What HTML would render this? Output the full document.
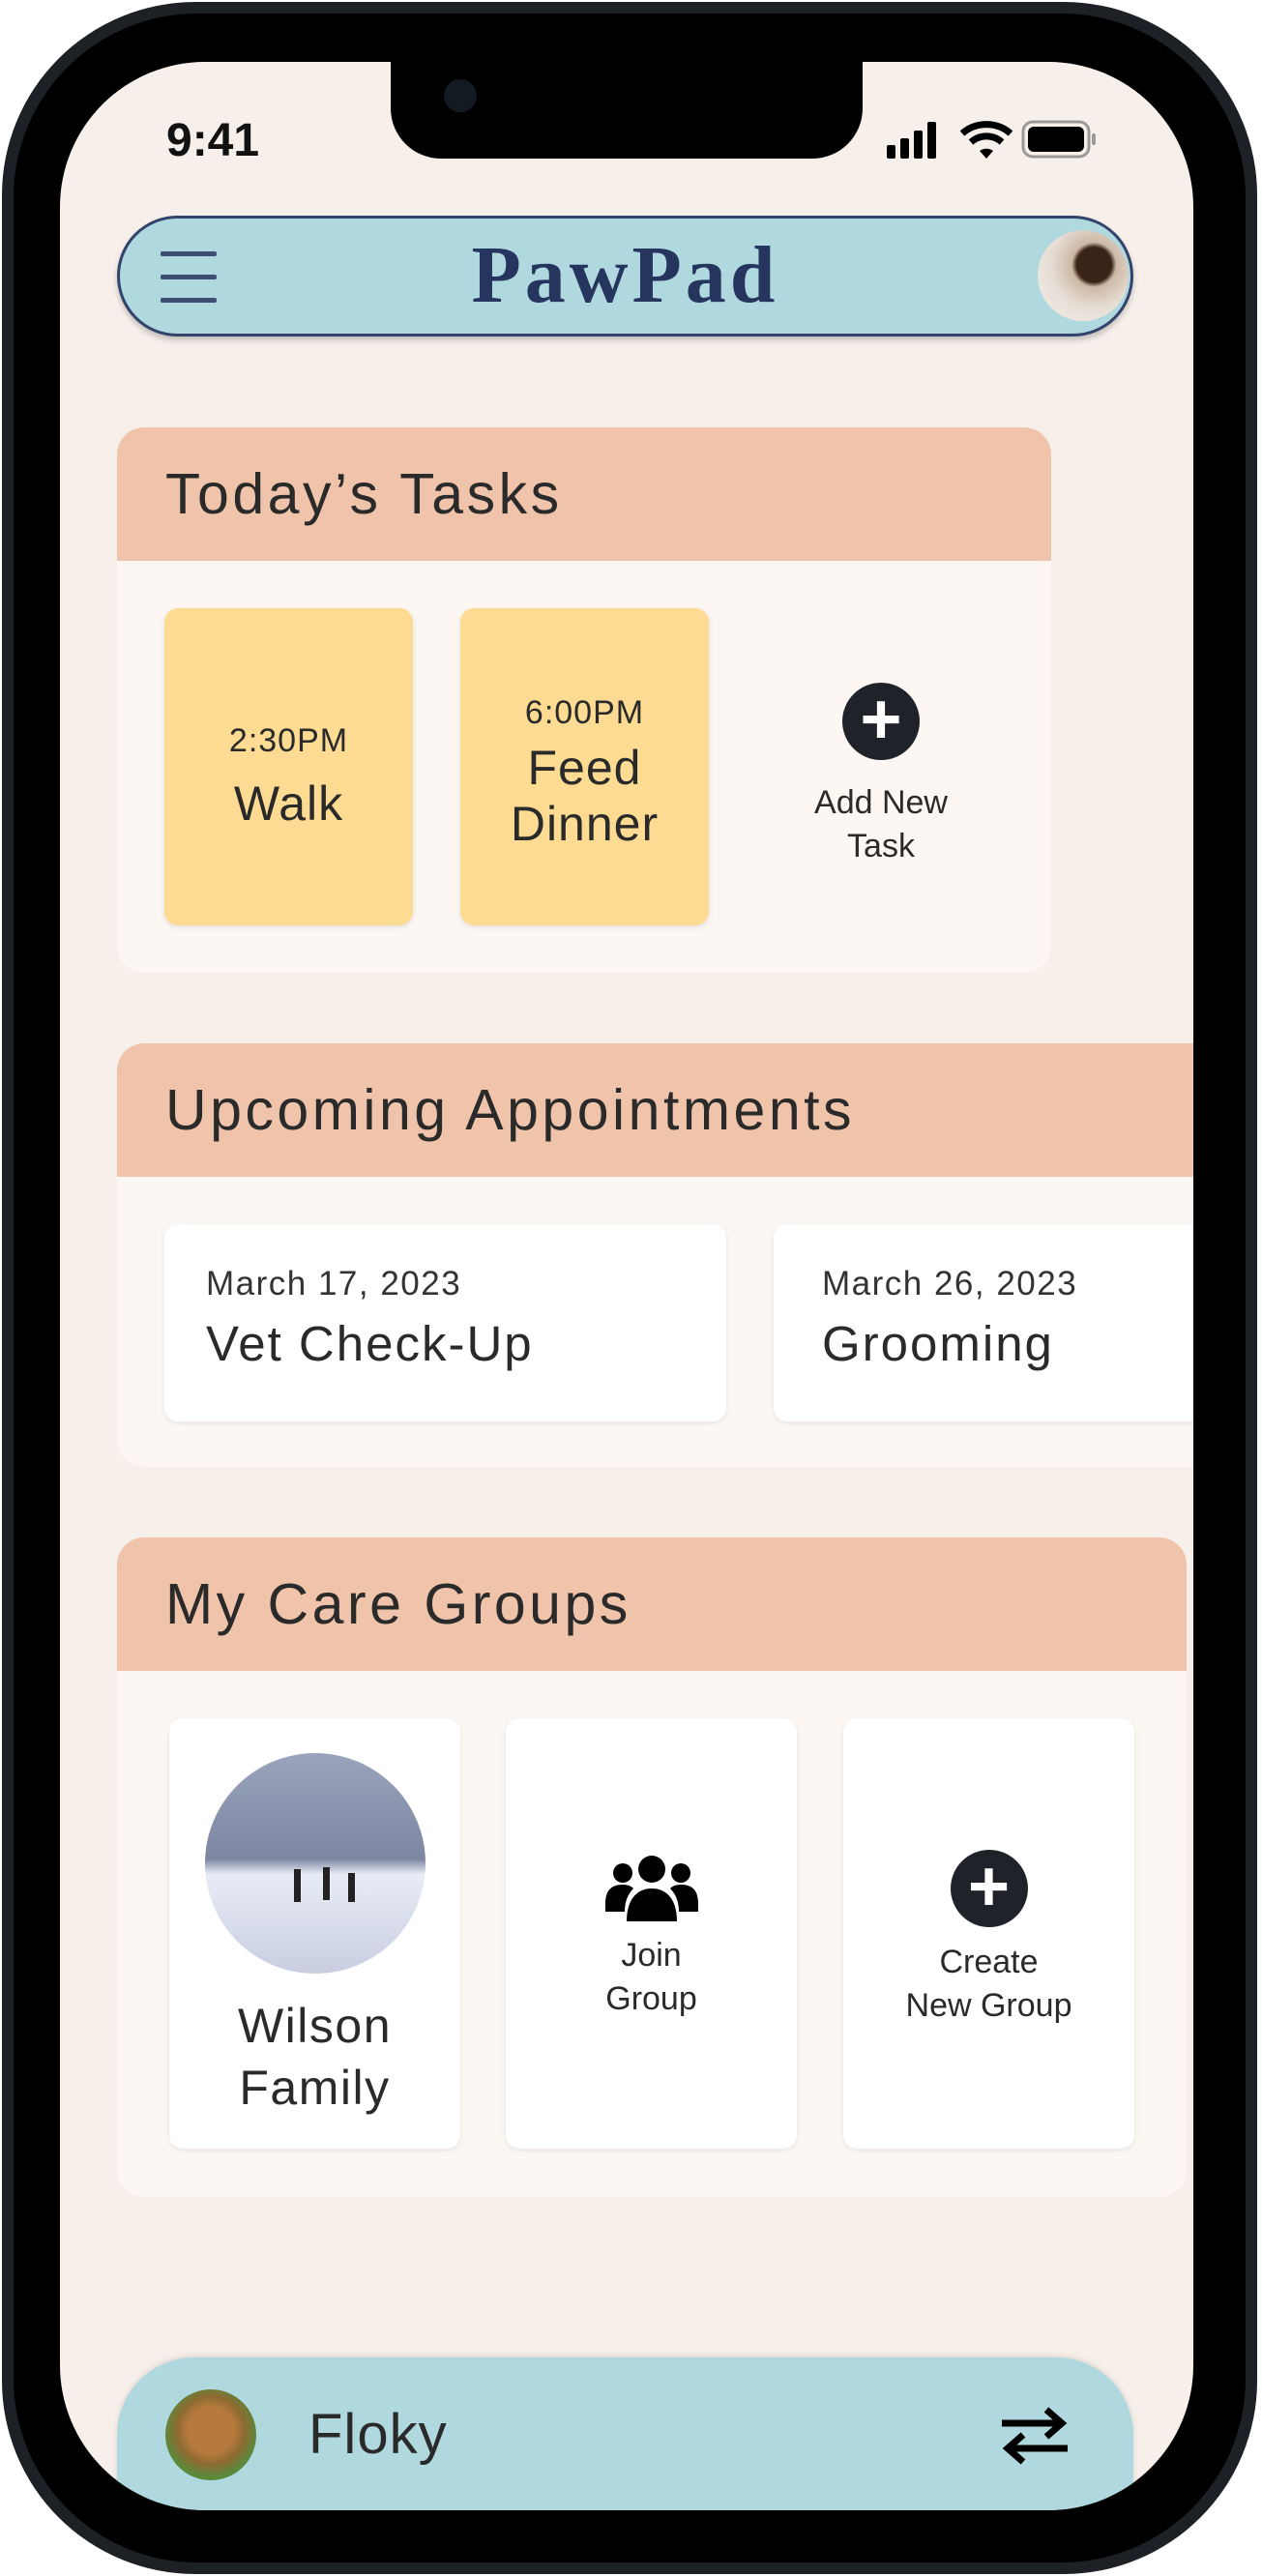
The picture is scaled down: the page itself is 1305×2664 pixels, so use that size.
<!DOCTYPE html>
<html><head><meta charset="utf-8">
<style>
*{margin:0;padding:0;box-sizing:border-box}
body{width:1305px;height:2664px;background:#fff;position:relative;overflow:hidden;font-family:"Liberation Sans",sans-serif;color:#2a2a2a}
.phone{position:absolute;left:2px;top:2px;width:1298px;height:2660px;background:#1d2126;border-radius:200px;}
.phone2{position:absolute;left:14px;top:14px;width:1274px;height:2636px;background:#000;border-radius:190px;}
.screen{position:absolute;left:62px;top:64px;width:1172px;height:2532px;background:#f6efea;border-radius:150px;overflow:hidden}
.notch{position:absolute;left:342px;top:-2px;width:488px;height:102px;background:#000;border-radius:0 0 52px 52px}
.abs{position:absolute}
.time{left:110px;top:54px;font-size:48px;font-weight:bold;color:#111}
.pill{left:59px;top:159px;width:1051px;height:125px;background:#b0d8df;border:3px solid #33446c;border-radius:63px;box-shadow:0 4px 6px rgba(0,0,0,.2)}
.card{background:#fcf7f3;border-radius:28px;overflow:hidden}
.hdr{background:#f0c4aa;height:138px;padding-left:50px;font-size:59px;line-height:138px;color:#2a2a2a;letter-spacing:3.5px}
.tile{background:#fedb92;border-radius:14px;box-shadow:0 2px 6px rgba(0,0,0,.1);text-align:center;letter-spacing:1px}
.wc{background:#fff;border-radius:14px;box-shadow:0 2px 6px rgba(0,0,0,.08)}
.plus{border-radius:50%;background:#1f2329;color:#fff;text-align:center}
</style></head><body>
<div class="phone"></div><div class="phone2"></div>
<div class="screen">
  <div class="notch"><div style="position:absolute;left:55px;top:20px;width:34px;height:34px;border-radius:50%;background:#141a22"></div></div>
  <div class="abs time">9:41</div>
  <svg class="abs" style="left:855px;top:56px" width="240" height="50" viewBox="0 0 240 50">
    <rect x="0" y="30" width="9" height="14" rx="2"/><rect x="14" y="23" width="9" height="21" rx="2"/><rect x="28" y="15" width="9" height="29" rx="2"/><rect x="42" y="6" width="9" height="38" rx="2"/>
    <path d="M78 18a38 38 0 0 1 50 0" stroke="#000" stroke-width="7" fill="none"/><path d="M87 27a24 24 0 0 1 32 0" stroke="#000" stroke-width="7" fill="none"/><path d="M96 36l7 8 7-8a12 12 0 0 0-14 0z"/>
    <rect x="141" y="6" width="68" height="36" rx="10" fill="none" stroke="#999" stroke-width="3"/><rect x="146" y="11" width="58" height="26" rx="6"/><rect x="212" y="18" width="4" height="12" rx="2" fill="#999"/>
  </svg>
  <div class="abs pill">
    <div class="abs" style="left:42px;top:34px;width:58px;height:5px;background:#3b4d73;border-radius:2px"></div>
    <div class="abs" style="left:42px;top:58px;width:58px;height:5px;background:#3b4d73;border-radius:2px"></div>
    <div class="abs" style="left:42px;top:82px;width:58px;height:5px;background:#3b4d73;border-radius:2px"></div>
    <div class="abs" style="left:0;width:1045px;top:10px;text-align:center;font-family:'Liberation Serif',serif;font-weight:bold;font-size:84px;color:#25355e;letter-spacing:4px">PawPad</div>
    <div class="abs" style="left:949px;top:12px;width:94px;height:94px;border-radius:50%;background:radial-gradient(ellipse at 62% 38%,#3a2418 0 22%,#cdb8a6 28%,#e6ded5 55%,#f3f0ec);"></div>
  </div>

  <div class="abs card" style="left:59px;top:378px;width:966px;height:564px">
    <div class="hdr">Today’s Tasks</div>
    <div class="abs tile" style="left:49px;top:187px;width:257px;height:328px"><div style="margin-top:118px;font-size:34px">2:30PM</div><div style="font-size:50px;margin-top:16px">Walk</div></div>
    <div class="abs tile" style="left:355px;top:187px;width:257px;height:328px"><div style="margin-top:89px;font-size:34px">6:00PM</div><div style="font-size:50px;line-height:58px;margin-top:8px">Feed<br>Dinner</div></div>
    <div class="abs plus" style="left:750px;top:264px;width:80px;height:80px;font-size:74px;line-height:76px;font-weight:bold">+</div>
    <div class="abs" style="left:660px;top:366px;width:260px;text-align:center;font-size:34px;line-height:45px">Add New<br>Task</div>
  </div>

  <div class="abs card" style="left:59px;top:1015px;width:1120px;height:438px;border-radius:28px 0 0 28px">
    <div class="hdr">Upcoming Appointments</div>
    <div class="abs wc" style="left:49px;top:187px;width:581px;height:204px"><div style="margin:42px 0 0 43px;font-size:35px;color:#333;letter-spacing:1.5px">March 17, 2023</div><div style="margin:12px 0 0 43px;font-size:51px;letter-spacing:2px">Vet Check-Up</div></div>
    <div class="abs wc" style="left:679px;top:187px;width:500px;height:204px"><div style="margin:42px 0 0 50px;font-size:35px;color:#333;letter-spacing:1.5px">March 26, 2023</div><div style="margin:12px 0 0 50px;font-size:51px;letter-spacing:2px">Grooming</div></div>
  </div>

  <div class="abs card" style="left:59px;top:1526px;width:1106px;height:682px">
    <div class="hdr">My Care Groups</div>
  </div>
  <div class="abs wc" style="left:113px;top:1713px;width:301px;height:445px;text-align:center">
    <div style="width:228px;height:228px;border-radius:50%;margin:36px auto 0;background:linear-gradient(#9aa4bd 0%,#7d86a0 48%,#e8ecf6 55%,#c8cee0 100%);position:relative">
      <div style="position:absolute;left:92px;top:120px;width:7px;height:34px;background:#222"></div><div style="position:absolute;left:122px;top:118px;width:7px;height:34px;background:#222"></div><div style="position:absolute;left:148px;top:124px;width:7px;height:30px;background:#222"></div>
    </div>
    <div style="font-size:50px;line-height:64px;margin-top:22px;letter-spacing:1.5px">Wilson<br>Family</div>
  </div>
  <div class="abs wc" style="left:461px;top:1713px;width:301px;height:445px;text-align:center">
    <svg width="96" height="72" viewBox="0 0 96 72" style="margin-top:140px"><circle cx="48" cy="16" r="14"/><circle cx="18" cy="20" r="10"/><circle cx="78" cy="20" r="10"/><path d="M22 70c0-22 10-34 26-34s26 12 26 34z"/><path d="M0 52c0-14 6-20 18-20 6 0 9 2 11 4-6 6-9 14-9 24H0z"/><path d="M96 52c0-14-6-20-18-20-6 0-9 2-11 4 6 6 9 14 9 24h20z"/></svg>
    <div style="font-size:34px;line-height:45px;margin-top:6px">Join<br>Group</div>
  </div>
  <div class="abs wc" style="left:810px;top:1713px;width:301px;height:445px;text-align:center">
    <div class="plus" style="width:80px;height:80px;margin:136px auto 0;font-size:74px;line-height:76px;font-weight:bold">+</div>
    <div style="font-size:34px;line-height:45px;margin-top:14px">Create<br>New Group</div>
  </div>

  <div class="abs" style="left:59px;top:2374px;width:1051px;height:200px;background:#b0d8df;border-radius:80px 80px 0 0;box-shadow:0 -2px 6px rgba(0,0,0,.1)">
    <div class="abs" style="left:50px;top:33px;width:94px;height:94px;border-radius:50%;background:radial-gradient(circle at 50% 45%,#b57a3c 0 35%,#8d6a32 50%,#5a8a3a 70%,#4a7a30)"></div>
    <div class="abs" style="left:198px;top:46px;font-size:58px;letter-spacing:1px">Floky</div>
    <svg class="abs" style="left:911px;top:48px" width="76" height="66" viewBox="0 0 76 66"><path d="M4 20h62M50 6l16 14-16 14M72 46H10M26 32L10 46l16 14" stroke="#000" stroke-width="7" fill="none"/></svg>
  </div>
</div>
</body></html>
